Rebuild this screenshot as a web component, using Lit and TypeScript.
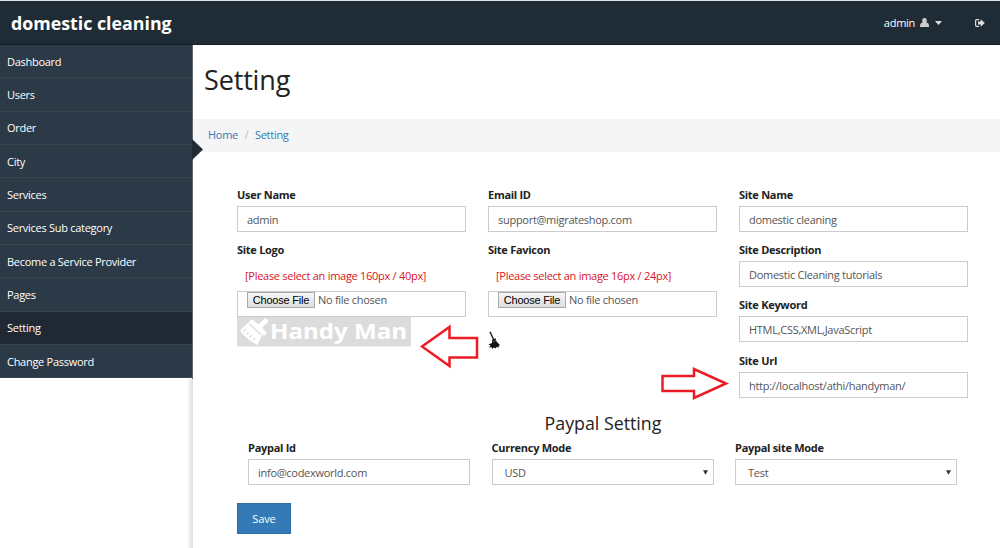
import { LitElement, html, css } from "lit";
import { customElement, property } from "lit/decorators.js";

const NAV = ["Dashboard", "Users", "Order", "City", "Services", "Services Sub category", "Become a Service Provider", "Pages", "Setting", "Change Password"];

@customElement("form-field")
class FormField extends LitElement {
  @property() label = "";
  @property() value = "";
  @property() kind = "text";
  @property() hint = "";
  static styles = css`
    :host { display: block; }
    .label { font-weight: 700; font-size: 11px; line-height: 16px; color: #222; height: 16px; white-space: nowrap; }
    .hint { color: #d9141e; font-size: 11px; line-height: 16px; height: 16px; margin: 10px 0 0 8px; white-space: nowrap; }
    .box { box-sizing: border-box; height: 26px; border: 1px solid #ccc; margin-top: 3px; padding: 0 9px; display: flex; align-items: center; font-size: 11px; color: #555; background: #fff; white-space: nowrap; }
    .select { padding: 0 5px 0 12px; justify-content: space-between; }
    .file { margin-top: 7px; align-items: flex-start; }
    .choose { box-sizing: border-box; height: 16px; width: 68px; border: 1px solid #aaa; background: linear-gradient(#f6f6f6, #dedede); color: #000; font: 11px/15px "Liberation Sans", sans-serif; letter-spacing: -0.2px; text-align: center; margin-right: 3px; }
    .none { line-height: 16px; }
  `;
  render() {
    return html`
      <div class="label">${this.label}</div>
      ${this.hint ? html`<div class="hint">${this.hint}</div>` : ""}
      ${this.kind === "file"
        ? html`<div class="box file"><span class="choose">Choose File</span><span class="none">No file chosen</span></div>`
        : this.kind === "select"
        ? html`<div class="box select"><span>${this.value}</span><svg width="5" height="5" viewBox="0 0 5 5"><path d="M0 .3h5L2.5 4.8z" fill="#333"/></svg></div>`
        : html`<div class="box"><span>${this.value}</span></div>`}
    `;
  }
}

@customElement("app-root")
class AppRoot extends LitElement {
  static styles = css`
    :host { display: block; position: relative; width: 1000px; height: 548px; overflow: hidden; background: #fff; font-family: "Open Sans", sans-serif; font-size: 11px; letter-spacing: -0.28px; color: #222; }
    .top { box-sizing: border-box; height: 45px; border-top: 1px solid #dde5e5; border-bottom: 1px solid #131d24; background: #202c35; color: #fff; display: flex; align-items: center; padding: 0 15px 0 11px; }
    .brand { font-size: 17.8px; font-weight: 700; letter-spacing: 0; flex: 1; }
    .user { display: flex; align-items: center; }
    .user .person { margin: 0 6px 0 5px; }
    .user .exit { margin-left: 33px; }
    .body { display: flex; height: 503px; }
    nav { width: 192px; border-right: 1px solid #5d6870; height: 334px; }
    .item { box-sizing: border-box; height: 33.35px; border-bottom: 1px solid #374550; background: #2c3a47; color: #fff; padding: 0 0 0 7px; display: flex; align-items: center; }
    .item.on { background: #202933; }
    main { flex: 1; }
    h1 { margin: 0; font-weight: 400; font-size: 27px; letter-spacing: -0.15px; line-height: 36px; padding: 17px 0 21px 11px; height: 36px; }
    .crumbs { box-sizing: border-box; height: 33px; background: #f5f5f5; display: flex; align-items: center; padding: 0 0 2px 15px; color: #337ab7; }
    .crumbs .sep { color: #bbb; width: 17px; text-align: center; }
    .grid { display: grid; grid-template-columns: 229px 229px 229px; column-gap: 22px; padding: 35px 0 0 44px; height: 212px; }
    .stack { display: flex; flex-direction: column; gap: 10px; }
    .stack .last { margin-top: 1px; }
    .logo { display: block; overflow: visible; }
    .brush { display: block; margin-top: 14px; }
    h2 { margin: 10px 0 0 44px; width: 732px; text-align: center; font-weight: 400; font-size: 17.8px; letter-spacing: 0; line-height: 28px; height: 26px; }
    .pay { display: grid; grid-template-columns: 222px 222px 222px; column-gap: 21.5px; padding: 5px 0 0 55px; }
    .save { width: 54px; height: 31px; box-sizing: border-box; margin: 18px 0 0 44px; border: 1px solid #2e6da4; background: #337ab7; color: #fff; letter-spacing: -0.1px; display: flex; align-items: center; justify-content: center; }
    .shade { position: absolute; left: 187px; top: 379px; width: 6px; height: 169px; background: linear-gradient(to right, #fff, #ddd); }
    .notch { position: absolute; left: 192px; top: 139px; }
    .arrow { position: absolute; left: 420px; top: 322px; }
    .arrow.right { left: 660px; top: 364px; }
  `;
  render() {
    return html`
      <header class="top">
        <div class="brand">domestic cleaning</div>
        <div class="user">
          <span>admin</span>
          <svg class="person" width="9" height="9" viewBox="0 0 9 9" fill="#ccc"><ellipse cx="4.500" cy="2.700" rx="2.300" ry="2.700"/><path d="M0 9V7.500Q0 5 2.400 4.600h4.200Q9 5 9 7.500V9z"/></svg>
          <svg width="7" height="4" viewBox="0 0 7 4"><path d="M0 0h7L3.500 4z" fill="#ddd"/></svg>
          <svg class="exit" width="10" height="8" viewBox="0 0 10 8"><path d="M4 .7H1.600Q.6.7.6 1.700v4.600q0 1 1 1H4" fill="none" stroke="#ddd" stroke-width="1.200"/><path d="M3 2.500h2.700V.3L9.800 4 5.700 7.700V5.500H3z" fill="#ddd"/></svg>
        </div>
      </header>
      <div class="body">
        <nav>${NAV.map((n) => html`<div class="item ${n === "Setting" ? "on" : ""}">${n}</div>`)}</nav>
        <main>
          <h1>Setting</h1>
          <div class="crumbs"><span>Home</span><span class="sep">/</span><span>Setting</span></div>
          <div class="grid">
            <div class="stack">
              <form-field label="User Name" value="admin"></form-field>
              <div>
                <form-field label="Site Logo" kind="file" hint="[Please select an image 160px / 40px]"></form-field>
                <svg class="logo" width="174" height="29" viewBox="0 0 174 29">
                  <rect width="174" height="29.500" fill="#dcdcdc"/>
                  <path d="M3 13.500 12 5 25 18 20.500 28Q10 23 3 13.500z" fill="#fff"/>
                  <path d="M15 5 27 16" stroke="#fff" stroke-width="4.500" stroke-linecap="round"/>
                  <path d="M21 11 28.500 4" stroke="#fff" stroke-width="5" stroke-linecap="round"/>
                  <path d="M12.500 7 23.500 17.500M6.500 14.500 9 12M9.500 17.500 11.500 15.500M12.500 20.500 15 18M16 23 18 21" stroke="#dcdcdc" stroke-width="1.100"/>
                  <text x="33" y="22" fill="#fff" font-family="Open Sans" font-weight="700" font-size="22" letter-spacing="0" textLength="137" lengthAdjust="spacingAndGlyphs">Handy Man</text>
                </svg>
              </div>
            </div>
            <div class="stack">
              <form-field label="Email ID" value="support@migrateshop.com"></form-field>
              <div>
                <form-field label="Site Favicon" kind="file" hint="[Please select an image 16px / 24px]"></form-field>
                <svg class="brush" width="13" height="18" viewBox="0 0 13 18"><path d="M2 .8 5.800 9" stroke="#222" stroke-width="1.500"/><path d="M4 9 7.500 7.200 8.500 10.500 12 14 10.500 15 11 16.500 8.500 16 7.500 17.500 6 16.500 4 18 3.500 16 1 16.800 2.500 14.500 .5 13.500 4 12z" fill="#111"/><path d="M4.500 11 8 9.500" stroke="#888" stroke-width=".7"/></svg>
              </div>
            </div>
            <div class="stack">
              <form-field label="Site Name" value="domestic cleaning"></form-field>
              <form-field label="Site Description" value="Domestic Cleaning tutorials"></form-field>
              <form-field label="Site Keyword" value="HTML,CSS,XML,JavaScript"></form-field>
              <form-field class="last" label="Site Url" value="http://localhost/athi/handyman/"></form-field>
            </div>
          </div>
          <h2>Paypal Setting</h2>
          <div class="pay">
            <form-field label="Paypal Id" value="info@codexworld.com"></form-field>
            <form-field label="Currency Mode" value="USD" kind="select"></form-field>
            <form-field label="Paypal site Mode" value="Test" kind="select"></form-field>
          </div>
          <div class="save">Save</div>
        </main>
      </div>
      <div class="shade"></div>
      <svg class="notch" width="11" height="21" viewBox="0 0 11 21"><path d="M0 0 11 10.500 0 21z" fill="#202c35"/></svg>
      <svg class="arrow" width="60" height="50" viewBox="0 0 60 50"><path d="M2 24.500 29.500 5V16H57V35.500H29.500V44z" fill="#fff" stroke="#ed1c24" stroke-width="2.500"/></svg>
      <svg class="arrow right" width="70" height="38" viewBox="0 0 70 38"><path d="M2.500 12H34V5L66 19.500 34 34V27H2.500z" fill="#fff" stroke="#ed1c24" stroke-width="2.500"/></svg>
    `;
  }
}
